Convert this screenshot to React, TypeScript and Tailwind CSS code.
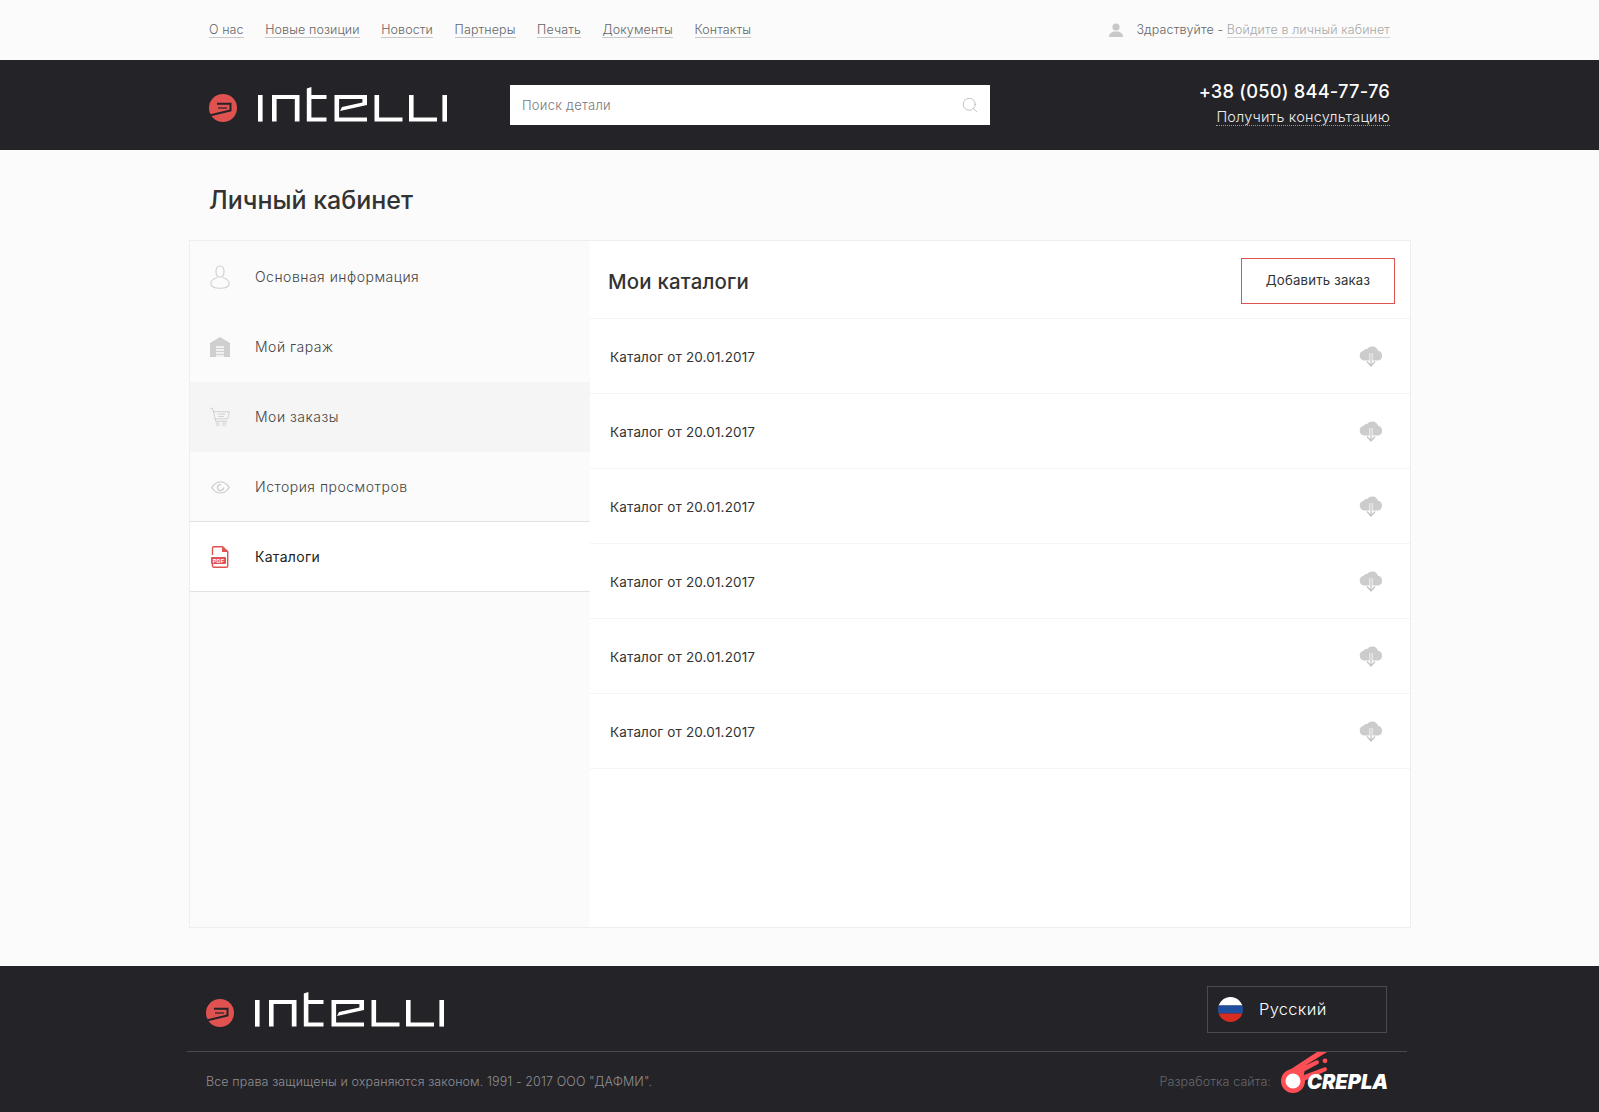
import { Search } from "lucide-react";

const font = { fontFamily: '"Inter", "Liberation Sans", sans-serif' };

function Logo() {
  return (
    <svg width="240" height="40" viewBox="0 0 240 40" className="block shrink-0">
      <circle cx="14" cy="23" r="14" fill="#e0524f" />
      <path d="M8 18.8H21.5V25.5L0.5 30.5" fill="none" stroke="#232328" strokeWidth="2" />
      <path d="M9 23H18" stroke="#232328" strokeWidth="1.2" />
      <g fill="#ffffff">
        <rect x="49" y="10" width="4.6" height="26.6" />
        <path d="M63 10H90.5V36.6H85.8V14H67.6V36.6H63Z" />
        <path d="M97.8 3.5L102.4 2V10H117.5V14H102.4V32.6H117.5V36.6H97.8Z" />
        <path d="M125.5 10H158V20L131 26L133 22L153.4 17.5V14H130.1V32.6H158V36.6H125.5Z" />
        <path d="M165.5 10H170.1V32.6H193.5V36.6H165.5Z" />
        <path d="M200 10H204.6V32.6H228V36.6H200Z" />
        <rect x="233.4" y="10" width="4.6" height="26.6" />
      </g>
    </svg>
  );
}

function PersonSolid() {
  return (
    <svg width="14" height="14" viewBox="0 0 14 14" className="block">
      <circle cx="7" cy="4" r="3.6" fill="#c8c8c8" />
      <path d="M0 14C0 10.5 3 9 5 8.5H9C11 9 14 10.5 14 14Z" fill="#c8c8c8" />
    </svg>
  );
}

function IconUser() {
  return (
    <svg width="20" height="24" viewBox="0 0 20 24" fill="none" stroke="#cfcfcf" strokeWidth="1.1">
      <path d="M6 6.5C6 3 7.6 1 10 1S14 3 14 6.5C14 9.5 12.5 12 10 12S6 9.5 6 6.5Z" />
      <path d="M7.3 12.5C4 13.5.8 15.5.8 18.5.8 21.5 4 23.2 10 23.2S19.2 21.5 19.2 18.5C19.2 15.5 16 13.5 12.7 12.5" />
    </svg>
  );
}

function IconGarage() {
  return (
    <svg width="20" height="20" viewBox="0 0 20 20">
      <path d="M0 6L10 0L20 6V20H16V8H4V20H0Z" fill="#cfcfcf" />
      <path d="M4 7.5H16V20H4Z" fill="#cfcfcf" />
      <path d="M6 10H14M6 13H14M6 16H14M6 19H14" stroke="#fbfbfb" strokeWidth="1.3" />
    </svg>
  );
}

function IconCart() {
  return (
    <svg width="21" height="20" viewBox="0 0 21 20" fill="none" stroke="#cfcfcf" strokeWidth="1">
      <path d="M0 .5L3 1.5L6 14.5H18" />
      <path d="M3.5 4.5H20.5L18.5 12H5" />
      <path d="M8 7H16M8.5 9.5H14.5" />
      <circle cx="8" cy="17.5" r="1.6" />
      <circle cx="15" cy="17.5" r="1.6" />
    </svg>
  );
}

function IconEye() {
  return (
    <svg width="19" height="13" viewBox="0 0 19 13" fill="none" stroke="#c8c8c8" strokeWidth="1.2">
      <path d="M.7 6.5C3 3 6 1 9.5 1S16 3 18.3 6.5C16 10 13 12 9.5 12S3 10 .7 6.5Z" />
      <path d="M12.5 6.5A3 3 0 1 1 10 3.6" />
    </svg>
  );
}

function IconPdf() {
  return (
    <svg width="18" height="22" viewBox="0 0 18 22" fill="none">
      <path d="M1.5 9V2A1.2 1.2 0 0 1 2.7 .8H11.5L16.7 5.5V20A1.2 1.2 0 0 1 15.5 21.2H2.7A1.2 1.2 0 0 1 1.5 20V18" stroke="#e0524f" strokeWidth="1.4" />
      <path d="M11 1V6H17Z" fill="#e0524f" />
      <rect x="0" y="11" width="15" height="7" rx="1" fill="#e0524f" />
      <text x="7.5" y="16.6" textAnchor="middle" fill="#fff" fontSize="5.4" fontWeight="700" fontFamily="Liberation Sans, sans-serif">PDF</text>
    </svg>
  );
}

function IconCloud() {
  return (
    <svg width="24" height="22" viewBox="0 0 24 22" className="block">
      <path d="M5 15.5A5 5 0 0 1 4.5 5.7 4.5 4.5 0 0 1 8.5 3.7 6 6 0 0 1 19 5.8 5 5 0 0 1 19.5 15.5Z" fill="#cccccc" />
      <path d="M12 8V20M8 16.5L12 21L16 16.5" fill="none" stroke="#ffffff" strokeWidth="3" />
      <path d="M12 8V20M8 16.5L12 21L16 16.5" fill="none" stroke="#c4c4c4" strokeWidth="1.3" />
    </svg>
  );
}

function Flag() {
  return (
    <svg width="25" height="25" viewBox="0 0 25 25" className="block">
      <defs>
        <clipPath id="flagclip">
          <circle cx="12.5" cy="12.5" r="12.5" />
        </clipPath>
      </defs>
      <g clipPath="url(#flagclip)">
        <rect width="25" height="8.5" fill="#ffffff" />
        <rect y="8.5" width="25" height="8" fill="#1f4f9e" />
        <rect y="16.5" width="25" height="8.5" fill="#d62d20" />
      </g>
    </svg>
  );
}

function Comet() {
  return (
    <svg width="52" height="46" viewBox="0 0 52 46" className="block shrink-0">
      <g fill="#ff4f55">
        <circle cx="13" cy="31" r="12" />
        <path d="M3.5 24L37 2H47L26 15L24 24L20 40Z" />
        <path d="M24 16L36 10.5A2 2 0 0 1 38 14L25 21Z" />
        <circle cx="45" cy="10.8" r="2.4" />
        <path d="M24 25L44 17.5A2 2 0 0 1 46 21L24 31Z" />
      </g>
      <circle cx="13" cy="31" r="7.5" fill="#ffffff" />
    </svg>
  );
}

const nav = ["О нас", "Новые позиции", "Новости", "Партнеры", "Печать", "Документы", "Контакты"];

const side = [
  { label: "Основная информация", icon: <IconUser /> },
  { label: "Мой гараж", icon: <IconGarage /> },
  { label: "Мои заказы", icon: <IconCart />, hover: true },
  { label: "История просмотров", icon: <IconEye /> },
];

export default function App() {
  return (
    <div style={font} className="w-[1599px] h-[1112px] overflow-hidden flex flex-col bg-[#fbfbfb] text-[#333]">
      <div className="h-[60px] px-[209px] flex items-center justify-between text-[12.5px] tracking-[0.1px] font-light">
        <div className="flex gap-[21.6px] text-[#666]">
          {nav.map((n) => (
            <a key={n} className="border-b border-[#c8c8c8] leading-[15px]">{n}</a>
          ))}
        </div>
        <div className="flex items-center">
          <PersonSolid />
          <span className="ml-[13px] text-[#666]">Здраствуйте -&nbsp;</span>
          <a className="text-[#a8a8a8] border-b border-[#d5d5d5] leading-[15px]">Войдите в личный кабинет</a>
        </div>
      </div>

      <div className="h-[90px] px-[209px] bg-[#232328] flex items-center">
        <div className="w-[301px]">
          <Logo />
        </div>
        <div className="w-[480px] h-[40px] bg-white flex items-center pl-[12px] pr-[11px]">
          <input
            placeholder="Поиск детали"
            className="flex-1 outline-none bg-transparent text-[13px] font-light tracking-[0.25px] mt-[2px] placeholder:text-[#777]"
          />
          <Search size={18} strokeWidth={1} color="#b0b0b0" />
        </div>
        <div className="ml-auto flex flex-col items-end pb-[5px]">
          <div className="text-[18.3px] leading-[24px] font-medium text-white tracking-[0.2px]">+38 (050) 844-77-76</div>
          <a className="mt-[5px] text-[14.5px] leading-[17px] font-light text-[#eeeeee] tracking-[0.2px] border-b border-dotted border-[#999]">Получить консультацию</a>
        </div>
      </div>

      <div className="h-[90px] px-[209px] flex items-center">
        <h1 className="text-[25px] font-medium text-[#333] mt-[11px]">Личный кабинет</h1>
      </div>

      <div className="ml-[189px] mr-[188px] h-[688px] border border-[#eeeeee] flex">
        <div className="w-[400px] shrink-0 pt-px">
          {side.map((s) => (
            <div
              key={s.label}
              className={`h-[70px] flex items-center pl-[20px] text-[14px] font-light text-[#444] tracking-[0.5px] ${s.hover ? "bg-[#f5f5f5]" : ""}`}
            >
              <div className="w-[20px] flex justify-center">{s.icon}</div>
              <span className="ml-[25px] -mt-[2px]">{s.label}</span>
            </div>
          ))}
          <div className="h-[71px] -mt-px bg-white border-y border-[#e2e2e2] flex items-center pl-[20px] text-[14px] text-[#222] tracking-[0.3px]">
            <div className="w-[20px] flex justify-center">
              <IconPdf />
            </div>
            <span className="ml-[25px] -mt-[1px]">Каталоги</span>
          </div>
        </div>
        <div className="flex-1 bg-white">
          <div className="h-[78px] flex items-center justify-between border-b border-[#f5f5f5] pl-[18px] pr-[15px]">
            <h2 className="text-[20.4px] font-medium text-[#333] tracking-[0.2px] mt-[6px]">Мои каталоги</h2>
            <button className="w-[154px] h-[46px] border border-[#e0524f] text-[13.2px] text-[#333] tracking-[0.2px] mt-[3px]">Добавить заказ</button>
          </div>
          {[0, 1, 2, 3, 4, 5].map((i) => (
            <div key={i} className="h-[75px] flex items-center justify-between border-b border-[#f5f5f5] pl-[20px] pr-[27px]">
              <span className="text-[13.5px] text-[#333] tracking-[0.15px] mt-[2px]">Каталог от 20.01.2017</span>
              <IconCloud />
            </div>
          ))}
        </div>
      </div>

      <div className="mt-[38px] h-[146px] bg-[#232328] flex flex-col">
        <div className="mx-[187px] mr-[192px] h-[86px] border-b border-[#4a4a4f] flex justify-between pl-[19px] pr-[20px]">
          <div className="pt-[24px]">
            <Logo />
          </div>
          <div className="mt-[20px] w-[180px] h-[47px] border border-[#4a4a4f] flex items-center pl-[10px]">
            <Flag />
            <span className="ml-[16px] text-[16.5px] text-white font-light tracking-[0.3px]">Русский</span>
          </div>
        </div>
        <div className="mx-[187px] mr-[192px] flex-1 flex items-center justify-between pl-[19px] pr-[19px]">
          <span className="text-[12.5px] font-light text-[#8f8f93] tracking-[0.11px]">Все права защищены и охраняются законом. 1991 - 2017 ООО "ДАФМИ".</span>
          <div className="flex items-center">
            <span className="text-[12.5px] font-light text-[#68686c] tracking-[0.1px] mr-[9px]">Разработка сайта:</span>
            <div className="relative w-[108px] h-[46px] -mt-[18px]">
              <Comet />
              <span className="absolute left-[27px] top-[21px] text-[20px] leading-[22px] font-black italic text-white">CREPLA</span>
            </div>
          </div>
        </div>
      </div>
    </div>
  );
}
